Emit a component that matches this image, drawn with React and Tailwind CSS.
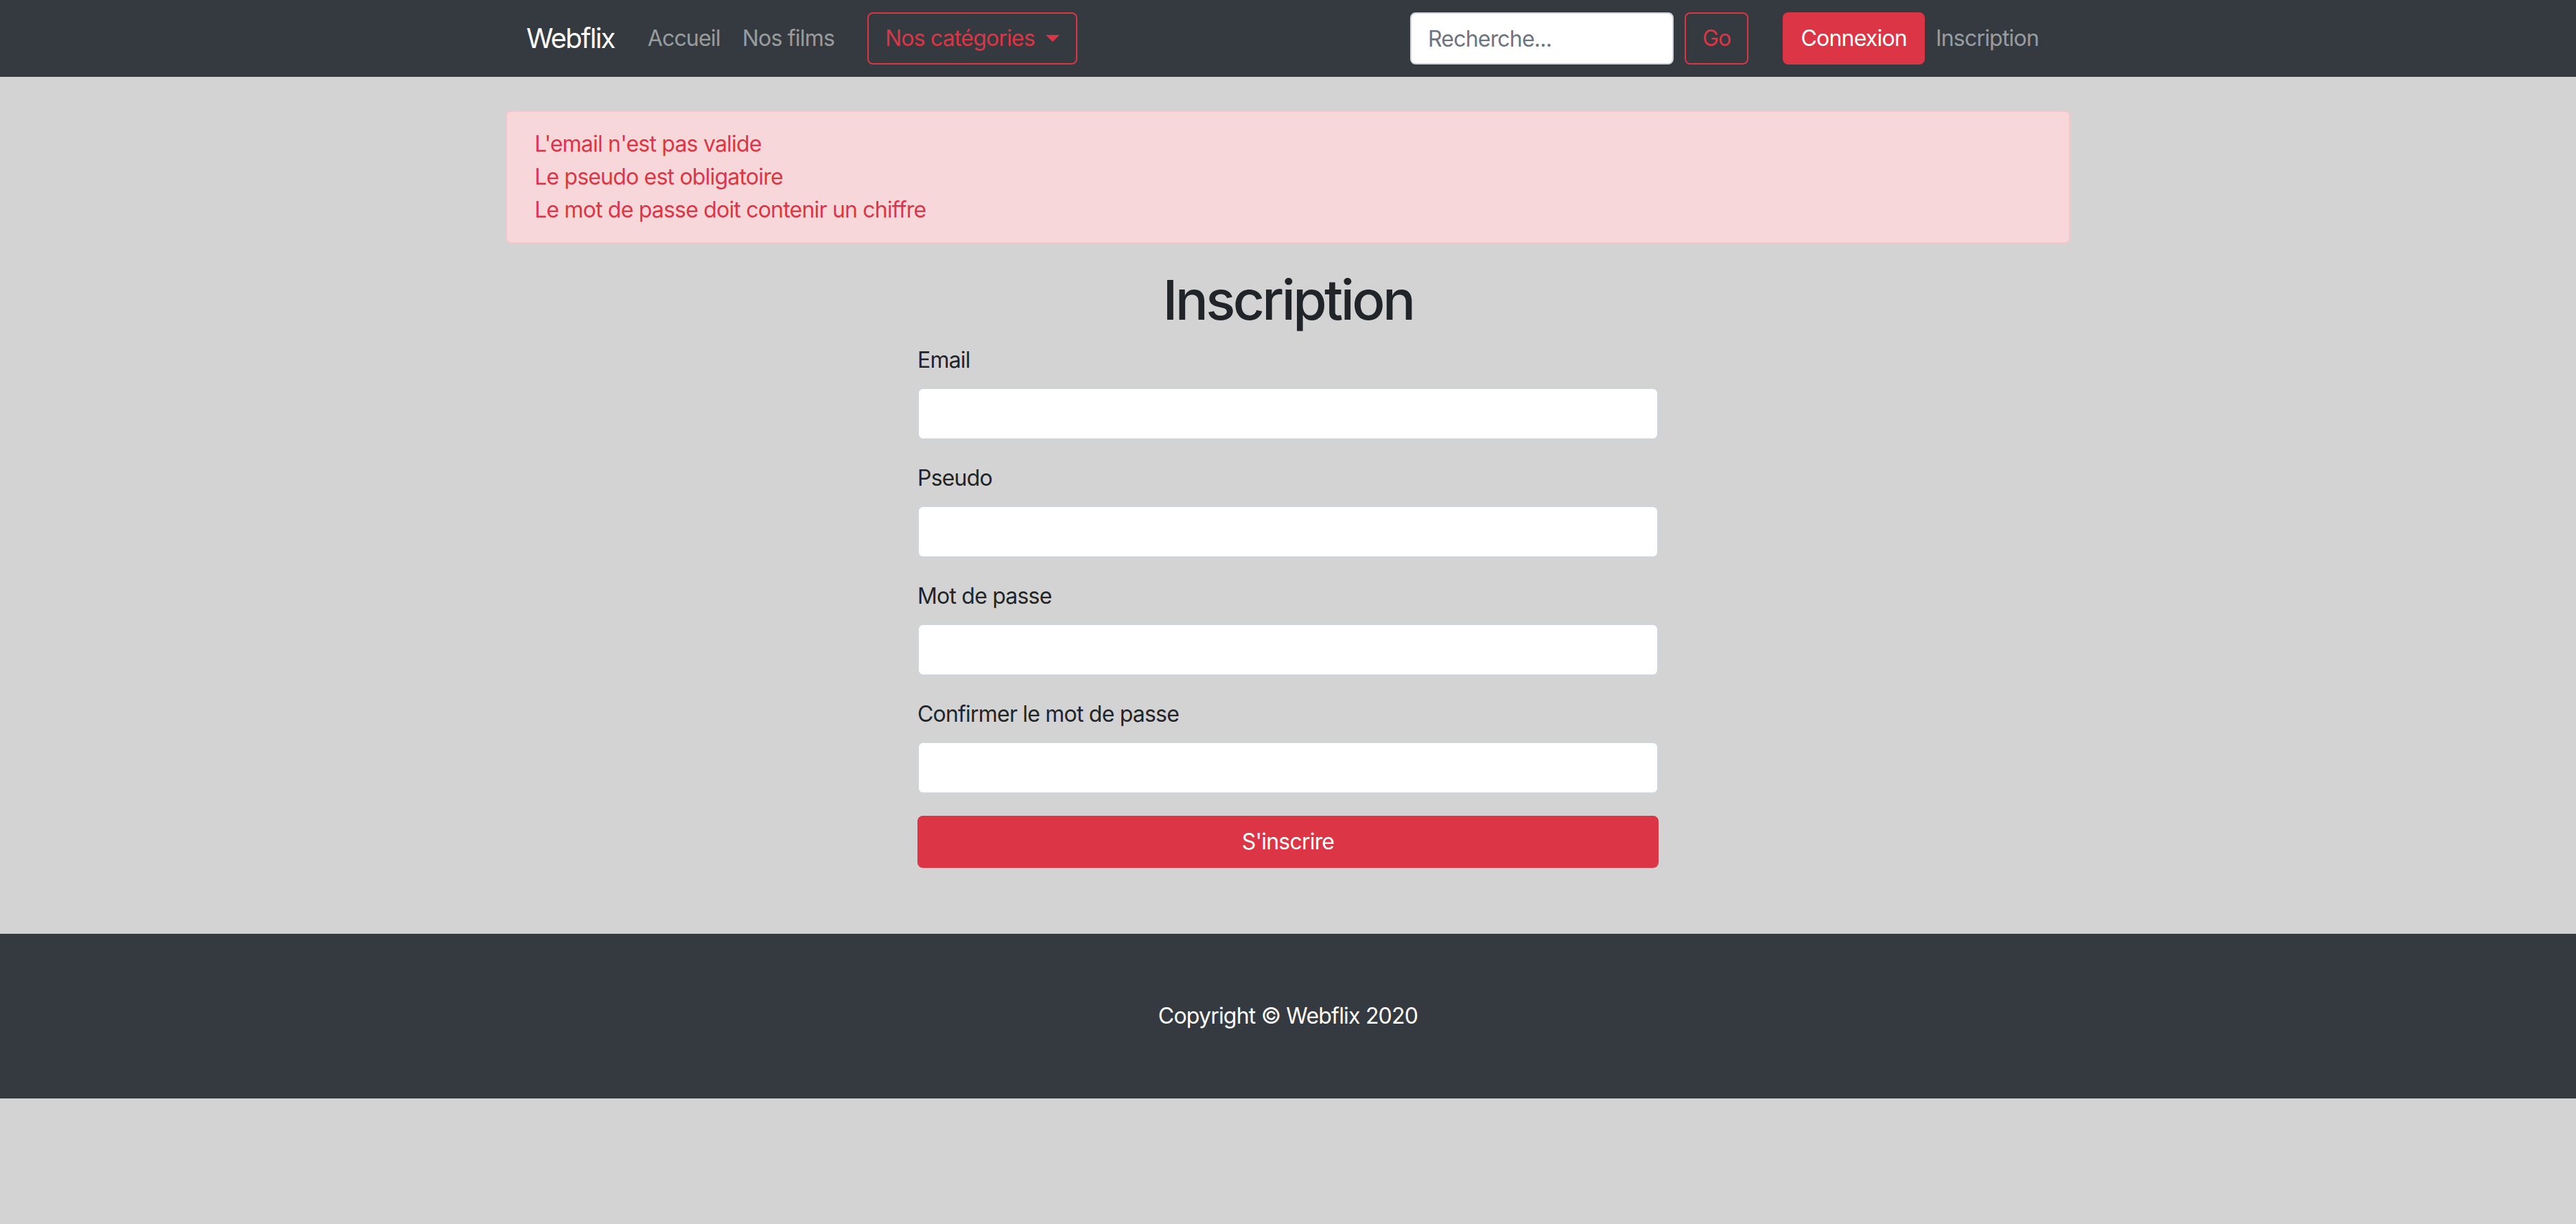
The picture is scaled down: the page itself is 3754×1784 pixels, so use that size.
import React from 'react';

function NavLink({ children, className = '' }) {
  return (
    <a href="#" className={`px-[16px] text-white/50 ${className}`}>
      {children}
    </a>
  );
}

function Field({ label, type = 'text' }) {
  return (
    <div className="mb-[32px]">
      <label className="mb-[16px] block">{label}</label>
      <input
        type={type}
        className="block h-[76px] w-full rounded-[8px] border-2 border-[#ced4da] bg-white px-[24px] outline-none"
      />
    </div>
  );
}

export default function App() {
  return (
    <div className="min-h-screen bg-[#d3d3d3] font-['Inter','Liberation_Sans',sans-serif] text-[32px] leading-[48px] tracking-[-0.025em] text-[#212529]">
      <nav className="h-[112px] bg-[#343a40]">
        <div className="mx-auto flex h-full w-[2280px] items-center px-[30px]">
          <a href="#" className="mr-[32px] text-[40px] leading-[60px] tracking-[-0.045em] text-white">
            Webflix
          </a>
          <NavLink>Accueil</NavLink>
          <NavLink>Nos films</NavLink>
          <button className="ml-[32px] flex h-[76px] items-center rounded-[8px] border-2 border-[#dc3545] px-[24px] text-[#dc3545]">
            Nos catégories
            <span className="ml-[16px] inline-block h-0 w-0 border-x-[10px] border-t-[10px] border-x-transparent border-t-[#dc3545]" />
          </button>

          <form className="ml-auto flex items-center">
            <input
              placeholder="Recherche..."
              className="h-[76px] w-[384px] rounded-[8px] border-2 border-[#ced4da] bg-white px-[24px] text-[#495057] outline-none placeholder:text-[#6c757d]"
            />
            <button
              type="button"
              className="ml-[16px] h-[76px] rounded-[8px] border-2 border-[#dc3545] px-[24px] text-[#dc3545]"
            >
              Go
            </button>
          </form>

          <a href="#" className="ml-[50px] flex h-[76px] items-center rounded-[8px] bg-[#dc3545] px-[26px] text-white">
            Connexion
          </a>
          <NavLink>Inscription</NavLink>
        </div>
      </nav>

      <main className="mx-auto w-[2280px] pt-[49px] pb-[96px]">
        <div className="mb-[32px] rounded-[8px] border-2 border-[#f5c6cb] bg-[#f8d7da] px-[40px] py-[23px] text-[#dc3545]">
          <div>L'email n'est pas valide</div>
          <div>Le pseudo est obligatoire</div>
          <div>Le mot de passe doit contenir un chiffre</div>
        </div>

        <h1 className="mb-[16px] pt-[2px] text-center text-[80px] leading-[96px] font-medium tracking-[-0.045em]">
          Inscription
        </h1>

        <form className="mx-auto w-[1080px]">
          <Field label="Email" type="email" />
          <Field label="Pseudo" />
          <Field label="Mot de passe" type="password" />
          <Field label="Confirmer le mot de passe" type="password" />
          <button
            type="button"
            className="block h-[76px] w-full rounded-[8px] bg-[#dc3545] text-white"
          >
            S'inscrire
          </button>
        </form>
      </main>

      <footer className="bg-[#343a40] py-[96px] text-center text-white">
        Copyright © Webflix 2020
      </footer>
    </div>
  );
}
